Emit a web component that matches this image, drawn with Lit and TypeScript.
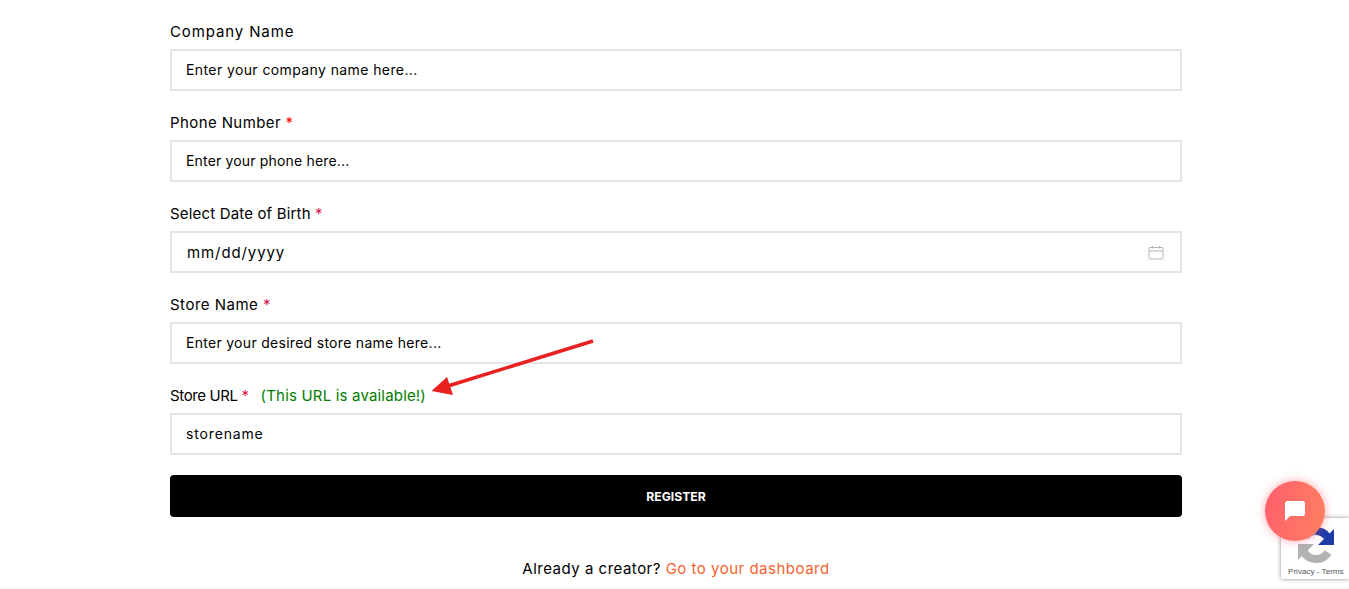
import { LitElement, html, css } from "lit";
import { customElement } from "lit/decorators.js";

@customElement("app-root")
export class AppRoot extends LitElement {
  static styles = css`
    :host { display: block; position: relative; height: 589px; overflow: hidden; background: #fff;
      font-family: Inter, "Liberation Sans", sans-serif; color: #000; font-size: 15px; }
    .form { width: 1012px; margin-left: 170px; padding-top: 21px; display: flex; flex-direction: column; }
    .field { display: flex; flex-direction: column; gap: 6px; margin-bottom: 21px; }
    .field.last { margin-bottom: 20px; }
    .label { line-height: 22px; height: 22px; font-size: 15px; letter-spacing: 0.3px; white-space: nowrap; }
    .l-company { letter-spacing: 0.88px; }
    .l-phone { letter-spacing: 0.4px; }
    .l-date { letter-spacing: 0.17px; }
    .l-store { letter-spacing: 0.5px; }
    .l-url { letter-spacing: -0.37px; }
    .req { color: #f00; }
    .req.crim { color: #d9164b; }
    .ok { color: #007d00; margin-left: 8px; letter-spacing: 0.18px; }
    .input { box-sizing: border-box; height: 42px; border: 2px solid #e5e5e5; padding: 0 14px 2px; display: flex; align-items: center;
      justify-content: space-between; font-size: 14px; letter-spacing: 0.21px; white-space: nowrap; }
    .p-company { letter-spacing: 0.4px; }
    .p-phone { letter-spacing: 0.17px; }
    .p-store { letter-spacing: 0.29px; }
    .p-url { letter-spacing: 0.85px; }
    .date { font-size: 15px; letter-spacing: 0.9px; padding: 0 16px 0 15px; }
    .btn { height: 42px; border-radius: 4px; background: #000; color: #fff; display: flex; align-items: center; justify-content: center;
      font-size: 12.2px; font-weight: 700; }
    .foot { margin-top: 41px; text-align: center; font-size: 15px; line-height: 22px; letter-spacing: 0.5px; }
    .foot span { color: #f4622f; }
    .base { position: absolute; left: 0; right: 0; bottom: 0; height: 2px; background: #f8f8f8; }
    .arrow { position: absolute; left: 425px; top: 335px; }
    .badge { position: absolute; left: 1281px; top: 518px; width: 68px; height: 61px; background: #fff; border-radius: 2px 0 0 2px;
      box-shadow: 0 0 4px rgba(0,0,0,.45); }
    .badge svg { position: absolute; left: 16px; top: 4px; }
    .terms { position: absolute; left: 7px; top: 48px; font: 8.1px/11px "Liberation Sans", sans-serif; color: #555; white-space: nowrap; }
    .chat { position: absolute; left: 1265px; top: 481px; width: 60px; height: 60px; border-radius: 50%;
      background: linear-gradient(100deg, #ff5e6c, #ff8161); box-shadow: 0 0 10px rgba(255,80,100,.5);
      display: flex; align-items: center; justify-content: center; }
  `;

  field(label: string, lc: string, req: any, ph: string, pc: string) {
    return html`<div class="field"><div class="label ${lc}">${label}${req}</div><div class="input ${pc}">${ph}</div></div>`;
  }

  render() {
    const star = html` <span class="req">*</span>`;
    const crim = html` <span class="req crim">*</span>`;
    return html`
      <div class="form">
        ${this.field("Company Name", "l-company", "", "Enter your company name here...", "p-company")}
        ${this.field("Phone Number", "l-phone", star, "Enter your phone here...", "p-phone")}
        <div class="field">
          <div class="label l-date">Select Date of Birth${crim}</div>
          <div class="input date">mm/dd/yyyy
            <svg width="16" height="15" viewBox="0 0 16 15" fill="none" stroke="#b5b5b5" stroke-width="1">
              <rect x="1" y="2.5" width="14" height="11.5" rx="1"/><path d="M1 6h14M4.5 1v2.500M11.500 1v2.500"/>
            </svg>
          </div>
        </div>
        ${this.field("Store Name", "l-store", crim, "Enter your desired store name here...", "p-store")}
        <div class="field last">
          <div class="label l-url">Store URL${crim} <span class="ok">(This URL is available!)</span></div>
          <div class="input p-url">storename</div>
        </div>
        <div class="btn">REGISTER</div>
        <div class="foot">Already a creator? <span>Go to your dashboard</span></div>
      </div>
      <div class="base"></div>
      <svg class="arrow" width="175" height="70" viewBox="425 335 175 70">
        <path d="M593 341L448 386" stroke="#e82020" stroke-width="3.500" fill="none"/>
        <path d="M431.500 391L447 377L453 395Z" fill="#e82020"/>
      </svg>
      <div class="badge">
        <svg width="38" height="44" viewBox="0 0 38 44" fill="none">
          <path d="M8 14.500A14 14 0 0 1 19 9" stroke="#6f8de0" stroke-width="8"/>
          <path d="M19 9A14 14 0 0 1 30 14.500" stroke="#1c3aa9" stroke-width="8"/>
          <path d="M37 7V23H21Z" fill="#1c3aa9"/>
          <path d="M6.500 29A14 14 0 0 0 31 30.500" stroke="#b2b2b2" stroke-width="8"/>
          <path d="M1 22H17L1 38Z" fill="#b2b2b2"/>
        </svg>
        <div class="terms">Privacy - Terms</div>
      </div>
      <div class="chat">
        <svg width="20" height="20" viewBox="0 0 20 20"><path d="M2.500 0h15A2.500 2.500 0 0 1 20 2.500v10a2.500 2.500 0 0 1-2.500 2.500H5L0 20V2.500A2.500 2.500 0 0 1 2.500 0Z" fill="#fff"/></svg>
      </div>
    `;
  }
}
